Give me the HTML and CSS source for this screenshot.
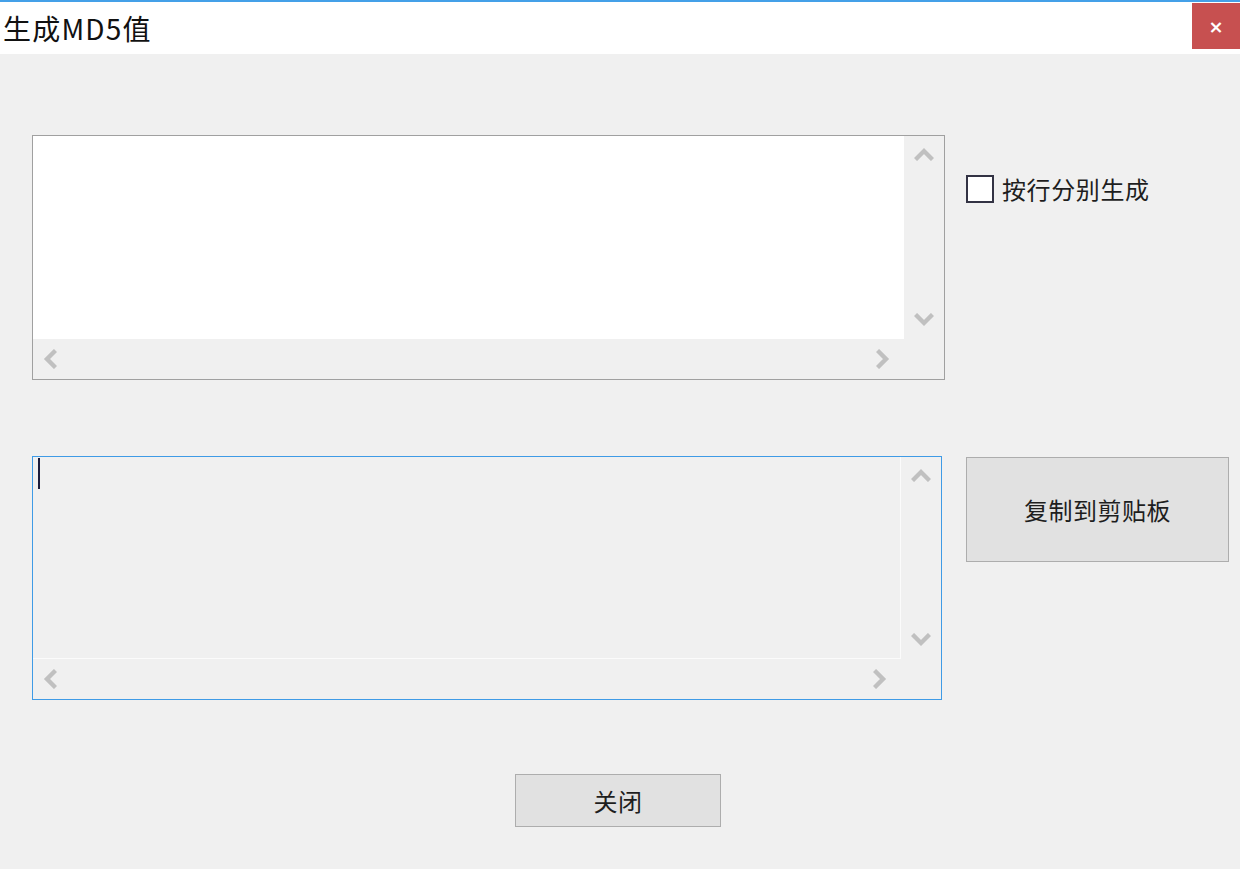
FILE: index.html
```html
<!DOCTYPE html>
<html lang="zh-CN">
<head>
<meta charset="utf-8">
<title>生成MD5值</title>
<link rel="stylesheet" href="styles.css">
</head>
<body>
<div class="window">
  <div class="topline"></div>
  <div class="titlebar">
    <div class="title">生成MD5值</div>
    <div class="close">×</div>
  </div>
  <div class="main">
    <div class="row row1">
      <div class="textbox box-input">
        <div class="content"></div>
        <div class="vbar">
          <svg class="arrow" width="20" height="14" viewBox="0 0 20 14"><path d="M1.5 12.5 L10 4 L18.5 12.5"/></svg>
          <svg class="arrow" width="20" height="14" viewBox="0 0 20 14"><path d="M1.5 1.5 L10 10 L18.5 1.5"/></svg>
        </div>
        <div class="hbar">
          <svg class="arrow" width="14" height="20" viewBox="0 0 14 20"><path d="M12.5 1.5 L4 10 L12.5 18.5"/></svg>
          <svg class="arrow" width="14" height="20" viewBox="0 0 14 20"><path d="M1.5 1.5 L10 10 L1.5 18.5"/></svg>
        </div>
        <div class="corner"></div>
      </div>
      <label class="check">
        <span class="checkbox"></span>
        <span class="check-label">按行分别生成</span>
      </label>
    </div>
    <div class="row row2">
      <div class="textbox box-output">
        <div class="content"><span class="caret"></span></div>
        <div class="vbar">
          <svg class="arrow" width="20" height="14" viewBox="0 0 20 14"><path d="M1.5 12.5 L10 4 L18.5 12.5"/></svg>
          <svg class="arrow" width="20" height="14" viewBox="0 0 20 14"><path d="M1.5 1.5 L10 10 L18.5 1.5"/></svg>
        </div>
        <div class="hbar">
          <svg class="arrow" width="14" height="20" viewBox="0 0 14 20"><path d="M12.5 1.5 L4 10 L12.5 18.5"/></svg>
          <svg class="arrow" width="14" height="20" viewBox="0 0 14 20"><path d="M1.5 1.5 L10 10 L1.5 18.5"/></svg>
        </div>
        <div class="corner"></div>
      </div>
      <button class="btn btn-copy">复制到剪贴板</button>
    </div>
    <div class="row row3">
      <button class="btn btn-close">关闭</button>
    </div>
  </div>
</div>
</body>
</html>
```

FILE: styles.css
```css
html, body {
  margin: 0;
  padding: 0;
}
body {
  background: #f0f0f0;
  font-family: "Noto Sans CJK SC", "Noto Sans", sans-serif;
  color: #1a1a1a;
  width: 1240px;
  height: 869px;
  overflow: hidden;
}
.window {
  display: flex;
  flex-direction: column;
  height: 869px;
}
.topline {
  height: 2px;
  background: #44a0e8;
}
.titlebar {
  height: 52px;
  background: #ffffff;
  display: flex;
  justify-content: space-between;
  align-items: flex-start;
}
.title {
  font-size: 28px;
  line-height: 52px;
  padding-left: 3px;
  color: #111;
  letter-spacing: 1.2px;
}
.close {
  width: 48px;
  height: 46px;
  margin-top: 1px;
  background: #c75050;
  color: #fff;
  font-family: "DejaVu Sans", sans-serif;
  font-size: 18px;
  font-weight: bold;
  display: flex;
  align-items: center;
  justify-content: center;
}
.main {
  padding: 81px 0 0 32px;
  display: flex;
  flex-direction: column;
}
.row {
  display: flex;
  align-items: flex-start;
}
.row1 {
  gap: 21px;
}
.row2 {
  margin-top: 76px;
  gap: 24px;
}
.row3 {
  margin-top: 74px;
  padding-left: 483px;
}
.textbox {
  display: grid;
  grid-template-columns: 1fr 40px;
  grid-template-rows: 1fr 40px;
  box-sizing: border-box;
  background: #f0f0f0;
}
.box-input {
  width: 913px;
  height: 245px;
  border: 1px solid #a0a0a0;
}
.box-input .content {
  background: #ffffff;
}
.box-output {
  width: 910px;
  height: 244px;
  border: 1px solid #3f9be6;
}
.box-output .content {
  background: #f0f0f0;
  border-right: 1px solid #fbfbfb;
  border-bottom: 1px solid #fbfbfb;
  padding: 1px 0 0 5px;
}
.caret {
  display: block;
  width: 2px;
  height: 31px;
  background: #1c1c3c;
}
.vbar {
  display: flex;
  flex-direction: column;
  align-items: center;
  justify-content: space-between;
  padding: 11px 0 12px 0;
}
.hbar {
  display: flex;
  align-items: center;
  justify-content: space-between;
  padding: 0 14px 0 10px;
}
.arrow path {
  fill: none;
  stroke: #c0c0c0;
  stroke-width: 4.4;
  stroke-linecap: butt;
  stroke-linejoin: miter;
}
.check {
  display: flex;
  align-items: center;
  gap: 8px;
  margin-top: 40px;
}
.checkbox {
  width: 28px;
  height: 28px;
  box-sizing: border-box;
  border: 2px solid #333344;
  background: #fff;
}
.check-label {
  font-size: 24px;
  line-height: 28px;
  letter-spacing: 0.6px;
  color: #1e1e1e;
}
.btn {
  box-sizing: border-box;
  background: #e1e1e1;
  border: 1px solid #adadad;
  font-family: "Noto Sans CJK SC", "Noto Sans", sans-serif;
  font-size: 24px;
  color: #1e1e1e;
  letter-spacing: 0.5px;
  padding: 0;
  margin: 0;
}
.btn-copy {
  width: 263px;
  height: 105px;
  margin-top: 1px;
}
.btn-close {
  width: 206px;
  height: 53px;
}
```
